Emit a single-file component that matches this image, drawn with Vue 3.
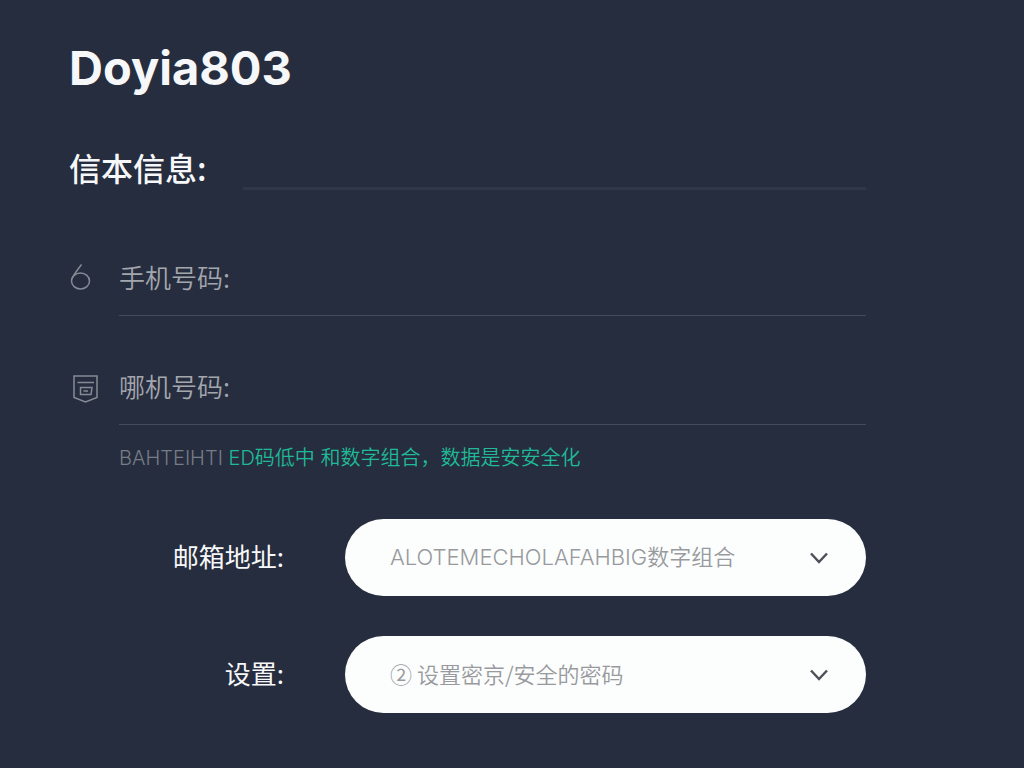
<script setup>
import { ref } from 'vue'

const phone = ref('')
const code = ref('')
const email = ref('combo')
const setting = ref('safe')
</script>

<template>
  <main class="page">
    <h1 class="brand">Doyia803</h1>

    <form class="form" @submit.prevent>
      <div class="section">
        <h2 class="section-title">信本信息:</h2>
        <span class="section-rule"></span>
      </div>

      <div class="field">
        <svg class="icon" viewBox="0 0 32 32" aria-hidden="true">
          <ellipse cx="11.500" cy="18" rx="9" ry="8" />
          <path d="M3.500 14.500Q6 10 12.500 1.500" />
        </svg>
        <div class="line">
          <label for="phone">手机号码:</label>
          <input id="phone" v-model="phone" type="tel" />
        </div>
      </div>

      <div class="field">
        <svg class="icon" viewBox="0 0 32 32" aria-hidden="true">
          <path d="M5 4H28V25.500L16.500 30 5 25.500Z" />
          <path d="M8.500 10.500H25M11.500 15.500H23L22 22.500H11.500ZM14.500 19H19" />
        </svg>
        <div class="line">
          <label for="code">哪机号码:</label>
          <input id="code" v-model="code" type="text" />
        </div>
      </div>

      <p class="hint">BAHTEIHTI <span class="accent">ED码低中 和数字组合，数据是安安全化</span></p>

      <div class="choice">
        <label for="email">邮箱地址:</label>
        <div class="select-box">
          <select id="email" v-model="email">
            <option value="combo">ALOTEMECHOLAFAHBIG数字组合</option>
          </select>
          <svg class="chevron" viewBox="0 0 20 12" aria-hidden="true">
            <path d="M2 1.500 10 10 18 1.500" />
          </svg>
        </div>
      </div>

      <div class="choice">
        <label for="setting">设置:</label>
        <div class="select-box">
          <select id="setting" v-model="setting" class="cjk">
            <option value="safe">② 设置密京/安全的密码</option>
          </select>
          <svg class="chevron" viewBox="0 0 20 12" aria-hidden="true">
            <path d="M2 1.500 10 10 18 1.500" />
          </svg>
        </div>
      </div>
    </form>
  </main>
</template>

<style>
body {
  background: #262d3e;
}
</style>

<style scoped>
.page {
  box-sizing: border-box;
  min-height: 100vh;
  padding: 38px 158px 32px 69px;
  background: #262d3e;
  color: #f6f7f9;
  font-family: "Noto Sans CJK SC", sans-serif;
}

.brand {
  margin: 0;
  font-family: Inter, sans-serif;
  font-size: 47px;
  font-weight: 700;
  line-height: 60px;
}

.section {
  display: flex;
  align-items: flex-end;
  gap: 36px;
  height: 46px;
  margin-top: 46px;
}

.section-title {
  margin: 0;
  font-size: 32px;
  font-weight: 500;
  line-height: 46px;
}

.section-rule {
  flex: 1;
  height: 3px;
  background: #303747;
}

.field {
  display: flex;
  margin-top: 65px;
}

.field + .field {
  margin-top: 48px;
}

.icon {
  flex: none;
  width: 32px;
  height: 32px;
  margin-top: 8px;
  fill: none;
  stroke: #858a95;
  stroke-width: 1.5;
}

.line {
  flex: 1;
  display: flex;
  align-items: flex-start;
  gap: 16px;
  height: 61px;
  box-sizing: border-box;
  margin-left: 18px;
  border-bottom: 1px solid #434a59;
  color: #a3a6ad;
  font-size: 26px;
  font-weight: 350;
  line-height: 44px;
}

.line input {
  flex: 1;
  min-width: 0;
  height: 44px;
  padding: 0;
  border: 0;
  outline: 0;
  background: transparent;
  color: inherit;
  font: inherit;
}

.hint {
  margin: 17px 0 0 50px;
  color: #777c88;
  font-family: Inter, "Noto Sans CJK SC", sans-serif;
  font-size: 20px;
  font-weight: 350;
  line-height: 32px;
  white-space: nowrap;
}

.accent {
  color: #20ba98;
}

.choice {
  display: grid;
  grid-template-columns: 215px 1fr;
  column-gap: 61px;
  align-items: center;
  margin-top: 40px;
}

.hint + .choice {
  margin-top: 45px;
}

.choice label {
  padding-bottom: 4px;
  font-size: 26px;
  font-weight: 400;
  line-height: 44px;
  text-align: right;
}

.select-box {
  position: relative;
}

.select-box select {
  display: block;
  width: 100%;
  height: 77px;
  padding: 0 72px 2px 45px;
  border: 0;
  border-radius: 39px;
  appearance: none;
  background: #fcfdfd;
  color: #989a9d;
  font-family: Inter, "Noto Sans CJK SC", sans-serif;
  font-size: 22px;
  font-weight: 350;
}

.select-box .cjk {
  padding-bottom: 4px;
  font-family: "Noto Sans CJK SC", sans-serif;
}

.chevron {
  position: absolute;
  top: 50%;
  right: 37px;
  width: 20px;
  height: 12px;
  margin-top: -6px;
  fill: none;
  stroke: #505158;
  stroke-width: 2.5;
  pointer-events: none;
}
</style>
